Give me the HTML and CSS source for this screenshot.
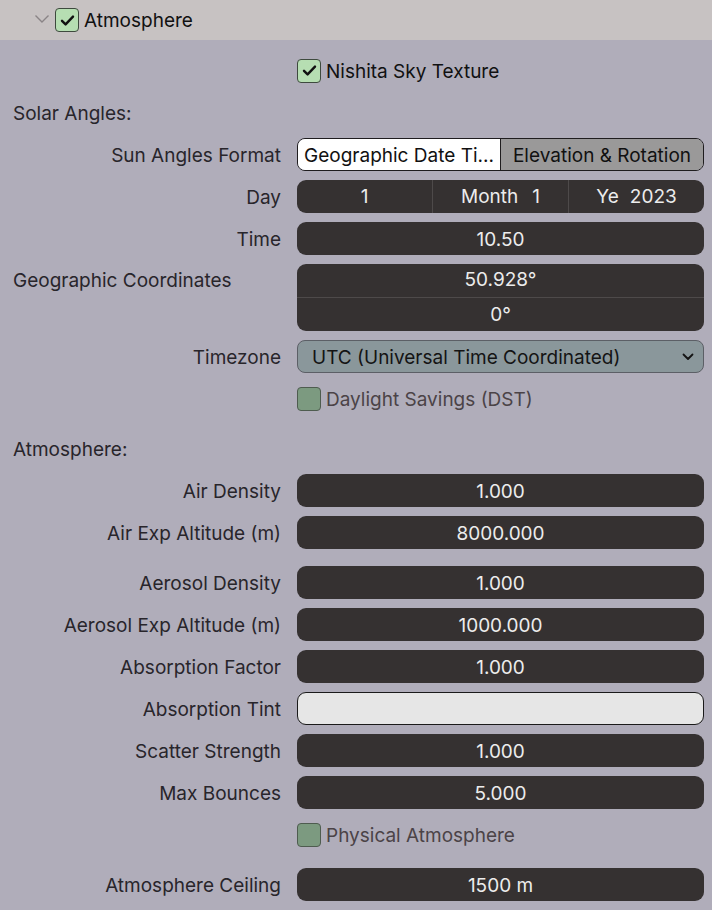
FILE: index.html
```html
<!DOCTYPE html>
<html>
<head>
<meta charset="utf-8">
<link rel="stylesheet" href="styles.css">
</head>
<body>
<div class="header">
  <svg class="chev" width="16" height="10" viewBox="0 0 16 10"><path d="M1.5 1.5 L8 8 L14.5 1.5" fill="none" stroke="#8a8486" stroke-width="1.4"/></svg>
  <span class="cb checked"><svg width="15" height="13" viewBox="0 0 15 13"><path d="M2 6.8 L5.6 10.4 L13 2.6" fill="none" stroke="#111" stroke-width="2.4" stroke-linecap="round" stroke-linejoin="round"/></svg></span>
  <span class="htitle">Atmosphere</span>
</div>
<div class="panel">
  <div class="row">
    <span></span>
    <div class="check"><span class="cb checked"><svg width="15" height="13" viewBox="0 0 15 13"><path d="M2 6.8 L5.6 10.4 L13 2.6" fill="none" stroke="#111" stroke-width="2.4" stroke-linecap="round" stroke-linejoin="round"/></svg></span><span class="ctext">Nishita Sky Texture</span></div>
  </div>
  <div class="section">Solar Angles:</div>
  <div class="row">
    <span class="label">Sun Angles Format</span>
    <div class="toggle"><span class="seg on">Geographic Date Ti...</span><span class="seg off">Elevation &amp; Rotation</span></div>
  </div>
  <div class="row">
    <span class="label">Day</span>
    <div class="field multi"><span class="part">1</span><span class="part">Month<i class="sp"></i>1</span><span class="part">Ye<i class="sp sm"></i>2023</span></div>
  </div>
  <div class="row">
    <span class="label">Time</span>
    <div class="field">10.50</div>
  </div>
  <div class="row top">
    <span class="label">Geographic Coordinates</span>
    <div class="field stack"><span class="cell">50.928°</span><span class="cell">0°</span></div>
  </div>
  <div class="row">
    <span class="label">Timezone</span>
    <div class="dropdown"><span>UTC (Universal Time Coordinated)</span><svg width="12" height="8" viewBox="0 0 12 8"><path d="M1.5 1.5 L6 6 L10.5 1.5" fill="none" stroke="#141414" stroke-width="1.8" stroke-linecap="round" stroke-linejoin="round"/></svg></div>
  </div>
  <div class="row">
    <span></span>
    <div class="check"><span class="cb off"></span><span class="ctext dim">Daylight Savings (DST)</span></div>
  </div>
  <div class="section gap">Atmosphere:</div>
  <div class="row"><span class="label">Air Density</span><div class="field">1.000</div></div>
  <div class="row"><span class="label">Air Exp Altitude (m)</span><div class="field">8000.000</div></div>
  <div class="row gap"><span class="label">Aerosol Density</span><div class="field">1.000</div></div>
  <div class="row"><span class="label">Aerosol Exp Altitude (m)</span><div class="field">1000.000</div></div>
  <div class="row"><span class="label">Absorption Factor</span><div class="field">1.000</div></div>
  <div class="row"><span class="label">Absorption Tint</span><div class="color"></div></div>
  <div class="row"><span class="label">Scatter Strength</span><div class="field">1.000</div></div>
  <div class="row"><span class="label">Max Bounces</span><div class="field">5.000</div></div>
  <div class="row">
    <span></span>
    <div class="check"><span class="cb off"></span><span class="ctext dim">Physical Atmosphere</span></div>
  </div>
  <div class="row gap"><span class="label">Atmosphere Ceiling</span><div class="field">1500 m</div></div>
</div>
</body>
</html>
```
FILE: styles.css
```css
* { box-sizing: border-box; }
html, body { margin: 0; padding: 0; }
body {
  width: 712px;
  height: 910px;
  overflow: hidden;
  background: #b0adba;
  font-family: Inter, "Noto Sans", sans-serif;
  font-size: 19px;
  color: #28252b;
}
.header {
  height: 40px;
  background: #c7c2c2;
  display: flex;
  align-items: center;
  padding-left: 34px;
}
.chev { margin-right: 5px; margin-top: -3px; }
.htitle { margin-left: 5px; color: #111; }
.cb {
  width: 24px;
  height: 24px;
  border-radius: 4px;
  display: inline-flex;
  align-items: center;
  justify-content: center;
  flex: none;
}
.cb.checked { background: #b6deb2; border: 1px solid #3e4a3e; }
.cb.off { background: #7c9a80; border: 1px solid #4e5c4f; }
.panel {
  padding: 14px 8px 0 13px;
  display: flex;
  flex-direction: column;
  gap: 9px;
}
.row {
  display: grid;
  grid-template-columns: 268px 407px;
  column-gap: 16px;
  height: 33px;
  align-items: center;
}
.row.top { height: 67px; align-items: start; }
.row.top .label { text-align: left; line-height: 33px; padding-top: 0; }
.gap { margin-top: 8px; }
.label { text-align: right; white-space: nowrap; padding-top: 2px; }
.section { height: 33px; line-height: 33px; padding-top: 1px; }
.check { display: flex; align-items: center; gap: 5px; }
.ctext { color: #111; padding-top: 2px; }
.ctext.dim { color: #4b4347; }
.field {
  height: 33px;
  background: #353131;
  border-radius: 9px;
  color: #ececec;
  display: flex;
  align-items: center;
  justify-content: center;
  padding-top: 1px;
}
.field.multi { justify-content: stretch; padding-top: 0; }
.part {
  flex: 1;
  text-align: center;
  height: 100%;
  line-height: 34px;
  border-left: 1px solid #4e4a4a;
}
.part:first-child { border-left: none; }
.sp { display: inline-block; width: 14px; }
.sp.sm { width: 11px; }
.field.stack {
  height: 67px;
  flex-direction: column;
  padding-top: 0;
}
.cell {
  flex: 1;
  width: 100%;
  text-align: center;
  line-height: 34px;
}
.cell + .cell { border-top: 1px solid #4e4a4a; }
.toggle {
  height: 33px;
  display: flex;
  border: 1px solid #1f1d1f;
  border-radius: 8px;
  overflow: hidden;
}
.seg {
  flex: 1;
  display: flex;
  align-items: center;
  justify-content: center;
  color: #111;
  white-space: nowrap;
  padding-top: 1px;
}
.seg.on { background: #ffffff; }
.seg.off { background: #9a9999; border-left: 1px solid #1f1d1f; }
.dropdown {
  height: 33px;
  background: #8a979b;
  border: 1px solid #5c5f66;
  border-radius: 8px;
  display: flex;
  align-items: center;
  justify-content: space-between;
  padding: 1px 9px 0 14px;
  color: #141414;
}
.color {
  height: 33px;
  background: #e6e6e6;
  border: 1px solid #1a1a1a;
  border-radius: 9px;
}
```
